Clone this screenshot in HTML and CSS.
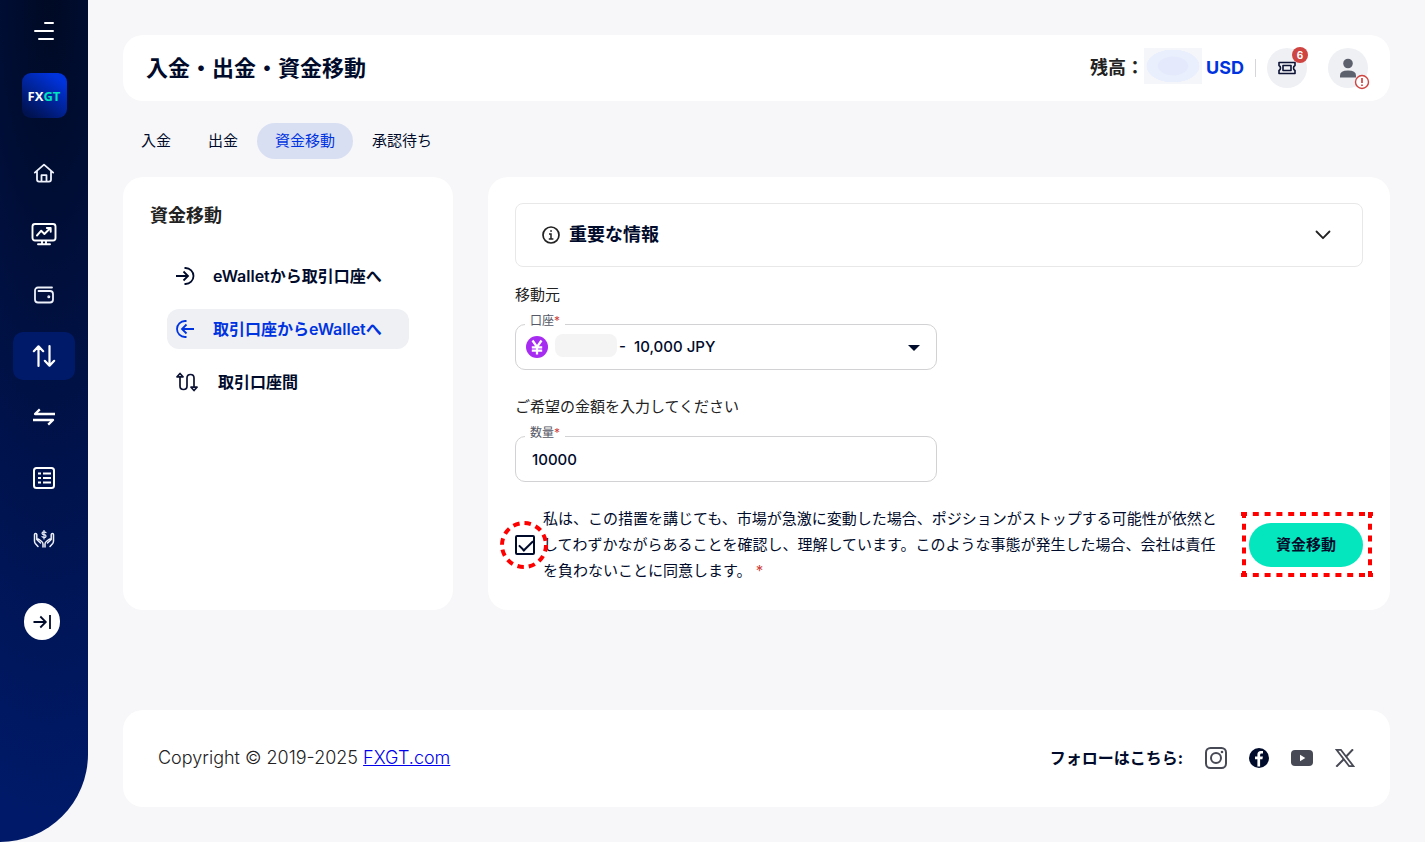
FILE: index.html
```html
<!DOCTYPE html>
<html lang="ja">
<head>
<meta charset="utf-8">
<meta name="viewport" content="width=device-width, initial-scale=1">
<title>入金・出金・資金移動</title>
<link rel="stylesheet" href="styles.css">
</head>
<body>
<aside class="sidebar">
  <button class="menu-toggle" type="button" aria-label="メニュー">
    <svg width="20" height="20" viewBox="0 0 20 20" fill="none" stroke="#fff" stroke-width="2" stroke-linecap="round"><path d="M11 2h8M1 10h18M5 18h14"/></svg>
  </button>
  <a class="logo" href="#"><span class="logo-fx">FX</span><span class="logo-gt">GT</span></a>
  <nav class="side-nav">
    <a class="side-link" href="#" aria-label="ホーム">
      <svg width="22" height="20" viewBox="0 0 22 20" fill="none" stroke="#eef1fa" stroke-width="1.8" stroke-linecap="round" stroke-linejoin="round"><path d="M1.8 9.6 11 1.6l9.2 8M4 8v8.600a2 2 0 0 0 2 2h10a2 2 0 0 0 2-2V8M8.500 18.400v-6.200h5v6.200"/></svg>
    </a>
    <a class="side-link" href="#" aria-label="取引">
      <svg width="26" height="24" viewBox="0 0 26 24" fill="none" stroke="#fff" stroke-width="1.900" stroke-linecap="round" stroke-linejoin="round"><rect x="1.500" y="2" width="23" height="16.500" rx="2.500"/><path d="M6 13.500l4.200-4.800 3.200 3.300 6-6M15.800 6h3.900v3.800M11 19v3M15 19v3M7 22.300h12"/></svg>
    </a>
    <a class="side-link" href="#" aria-label="ウォレット">
      <svg width="20" height="18" viewBox="0 0 20 18" fill="none" stroke="#eef1fa" stroke-width="1.800" stroke-linecap="round" stroke-linejoin="round"><path d="M18 1.500H4A3 3 0 0 0 1 4.500V13.500a3 3 0 0 0 3 3h12a3 3 0 0 0 3-3V8a3 3 0 0 0-3-3H4.500"/><circle cx="14.800" cy="10.800" r=".6" fill="#eef1fa"/></svg>
    </a>
    <a class="side-link is-active" href="#" aria-label="入金・出金・資金移動">
      <svg width="24" height="24" viewBox="0 0 24 24" fill="none" stroke="#fff" stroke-width="2.200" stroke-linecap="round" stroke-linejoin="round"><path d="M6.500 22V2.500M1.800 7.200l4.700-4.900 4.700 4.900M17.500 2v19.500M12.800 16.800l4.700 4.900 4.700-4.900"/></svg>
    </a>
    <a class="side-link" href="#" aria-label="両替">
      <svg width="24" height="18" viewBox="0 0 24 18" fill="none" stroke="#fff" stroke-width="2.300" stroke-linejoin="round"><path d="M23 6H3L7.800 1.400M1 12h20l-4.800 4.600"/></svg>
    </a>
    <a class="side-link" href="#" aria-label="履歴">
      <svg width="22" height="22" viewBox="0 0 22 22" fill="none" stroke="#fff" stroke-width="2"><rect x="1" y="1" width="20" height="20" rx="2.500"/><path d="M5 6.500h3M5 11h3M5 15.500h3M10 6.500h8M10 11h8M10 15.500h8"/></svg>
    </a>
    <a class="side-link" href="#" aria-label="パートナー">
      <svg width="22" height="18" viewBox="0 0 22 18" fill="none" stroke="#eef1fa" stroke-width="1.500" stroke-linecap="round" stroke-linejoin="round"><path d="M5 16.500 2.300 13.500Q1.500 12.500 1.500 11V4.500q0-1 1.100-1T3.800 4.500V9.500L7.500 13M4 9.500q1-1 2.200 0l2.500 2q1.300 1 1.300 2.500V17M17 16.500l2.700-3q.8-1 .8-2.500V4.500q0-1-1.100-1t-1.200 1V9.500L14.500 13M18 9.500q-1-1-2.200 0l-2.500 2q-1.300 1-1.300 2.500V17"/><path d="M13 2.600q-.8-.8-2-.8-2 0-2 1.400T11 4.600t2 1.500-2 1.400q-1.200 0-2-.8M11 .5V9" stroke-width="1.200"/></svg>
    </a>
  </nav>
  <button class="expand" type="button" aria-label="サイドバーを開く">
    <svg width="20" height="18" viewBox="0 0 20 18" fill="none" stroke="#000b2b" stroke-width="1.800"><path d="M1.500 9h12M8.300 3.500 13.800 9l-5.500 5.500M18 2v14"/></svg>
  </button>
</aside>

<main class="page">
  <header class="topbar">
    <h1 class="page-title">入金・出金・資金移動</h1>
    <div class="account">
      <span class="balance-label">残高：</span>
      <span class="balance-mask"></span>
      <span class="currency">USD</span>
      <span class="divider"></span>
      <button class="round-btn ticket" type="button" aria-label="クーポン">
        <svg width="20" height="14" viewBox="0 0 20 14" fill="none" stroke="#0b1233" stroke-width="1.600" stroke-linejoin="round"><path d="M2 1.500h16v3q-1.500.8-1.500 2.500t1.500 2.500v3H2v-3q1.500-.8 1.500-2.500T2 4.500z"/><rect x="6" y="4.500" width="8" height="5"/></svg>
        <span class="badge">6</span>
      </button>
      <button class="round-btn" type="button" aria-label="プロフィール">
        <svg width="18" height="20" viewBox="0 0 18 20" fill="#5d606d"><circle cx="9" cy="5.500" r="4.800"/><path d="M1 19.500V17.500Q1 12.500 9 12.500t8 5v2z"/></svg>
        <svg class="alert" width="16" height="16" viewBox="0 0 16 16" fill="#fff" stroke="#cf4340" stroke-width="1.400"><circle cx="8" cy="8" r="6.500"/><path d="M8 4v5M8 10.500V12" stroke-width="1.700"/></svg>
      </button>
    </div>
  </header>

  <nav class="tabs">
    <a class="tab" href="#">入金</a>
    <a class="tab" href="#">出金</a>
    <a class="tab is-active" href="#">資金移動</a>
    <a class="tab" href="#">承認待ち</a>
  </nav>

  <div class="columns">
    <section class="card side-card">
      <h2 class="card-title">資金移動</h2>
      <nav class="options">
        <a class="option" href="#">
          <svg width="20" height="18" viewBox="0 0 20 18" fill="none" stroke="#000b2b" stroke-width="1.800"><path d="M0 9h12.500M7.500 4.500 12 9l-4.500 4.500M8.500 1h1a8 8 0 0 1 0 16h-1"/></svg>
          <span>eWalletから取引口座へ</span>
        </a>
        <a class="option is-active" href="#">
          <svg width="20" height="18" viewBox="0 0 20 18" fill="none" stroke="#0033e0" stroke-width="1.800"><path d="M18 9H6M10.500 4.500 6 9l4.500 4.500M10.500 1h-1.500a8 8 0 0 0 0 16h1.500"/></svg>
          <span>取引口座からeWalletへ</span>
        </a>
        <a class="option option-wide" href="#">
          <svg width="22" height="20" viewBox="0 0 22 20" fill="none" stroke="#0b1233" stroke-width="1.700" stroke-linejoin="round"><path d="M4 5v9q0 3.500 3.500 3.500T11 14V6q0-3.500 3.500-3.500T18 6v9M1 4.800 4 1.500l3 3.300zM15 15.200l3 3.300 3-3.300z"/></svg>
          <span>取引口座間</span>
        </a>
      </nav>
    </section>

    <section class="card">
      <button class="accordion" type="button" aria-expanded="false">
        <svg width="18" height="18" viewBox="0 0 18 18" fill="none" stroke="#222"><circle cx="9" cy="9" r="8" stroke-width="1.700"/><path d="M7 8h2v5M6.800 13h4.600M8.200 5h1.700" stroke-width="1.500"/></svg>
        <span class="accordion-title">重要な情報</span>
        <svg width="16" height="10" viewBox="0 0 16 10" fill="none" stroke="#222" stroke-width="1.800" stroke-linecap="round" stroke-linejoin="round"><path d="M1.500 1.500 8 8.200l6.500-6.700"/></svg>
      </button>

      <form class="form">
        <p class="form-label">移動元</p>
        <div class="field">
          <label class="float-label" for="account">口座<span class="required">*</span></label>
          <svg class="yen" width="22" height="22" viewBox="0 0 22 22"><circle cx="11" cy="11" r="11" fill="#a62cf2"/><path d="M6.500 4.500 11 11l4.500-6.500M11 11v7.500M5.800 11.300h10.400M5.800 14.600h10.400" fill="none" stroke="#fff" stroke-width="2.300"/></svg>
          <span class="account-mask"></span>
          <select class="control select" id="account"><option>-&nbsp; 10,000 JPY</option></select>
          <svg class="caret" width="12" height="6" viewBox="0 0 12 6"><path d="M0 0h12L6 6z" fill="#000b2b"/></svg>
        </div>

        <p class="form-label amount-label">ご希望の金額を入力してください</p>
        <div class="field">
          <label class="float-label" for="amount">数量<span class="required">*</span></label>
          <input class="control" id="amount" type="text" value="10000">
        </div>

        <div class="consent">
          <span class="check-wrap">
            <input class="check" id="agree" type="checkbox" checked>
            <svg class="check-ring" width="48" height="48" viewBox="0 0 48 48" fill="none" stroke="#f00" stroke-width="4" stroke-dasharray="6.500 5"><circle cx="24" cy="24" r="22"/></svg>
          </span>
          <label class="consent-text" for="agree">私は、この措置を講じても、市場が急激に変動した場合、ポジションがストップする可能性が依然と<br>してわずかながらあることを確認し、理解しています。このような事態が発生した場合、会社は責任<br>を負わないことに同意します。 <span class="required">*</span></label>
          <span class="submit-wrap">
            <button class="submit" type="button">資金移動</button>
            <svg class="submit-ring" width="132" height="68" viewBox="0 0 132 68" fill="none" stroke="#f00" stroke-width="4" stroke-dasharray="6 5.800"><path d="M0 3h132M0 64h132M3 1v66M129 1v66"/></svg>
          </span>
        </div>
      </form>
    </section>
  </div>

  <footer class="footer">
    <p class="copyright">Copyright © 2019-2025 <a href="#">FXGT.com</a></p>
    <div class="follow">
      <span class="follow-label">フォローはこちら:</span>
      <a class="social" href="#" aria-label="Instagram"><svg width="22" height="22" viewBox="0 0 22 22" fill="none" stroke="#474955" stroke-width="2"><rect x="1" y="1" width="20" height="20" rx="4.500"/><circle cx="11" cy="11" r="5"/><circle cx="17" cy="5" r="1.300" fill="#474955" stroke="none"/></svg></a>
      <a class="social" href="#" aria-label="Facebook"><svg width="20" height="20" viewBox="0 0 20 20"><circle cx="10" cy="10" r="10" fill="#000b2b"/><path d="M8.400 18.500V11.300H6V8.500h2.400V6.600q0-3.600 3.500-3.600h2.100v2.600h-1.500q-1.400 0-1.400 1.400v1.500h2.800l-.5 2.800h-2.300v7.200z" fill="#fff"/></svg></a>
      <a class="social" href="#" aria-label="YouTube"><svg width="22" height="16" viewBox="0 0 22 16"><rect width="22" height="16" rx="4" fill="#474955"/><path d="M9 4.800v6.400l5.300-3.200z" fill="#fff"/></svg></a>
      <a class="social" href="#" aria-label="X"><svg width="20" height="18" viewBox="0 0 20 18" fill="none" stroke="#474955"><path d="M1.500.8h4.300l12.700 16.400h-4.300z" stroke-width="1.800"/><path d="M18 .3l-7.300 7.700M8.800 10.200 1.300 17.700" stroke-width="2"/></svg></a>
    </div>
  </footer>
</main>
</body>
</html>
```
FILE: styles.css
```css
* { box-sizing: border-box; }

body {
  margin: 0;
  display: flex;
  min-height: 100vh;
  background: #f7f7f9;
  color: #222;
  font-family: Inter, "Noto Sans CJK JP", sans-serif;
  font-size: 15px;
}

h1, h2, p { margin: 0; }
a { text-decoration: none; color: inherit; }
button, input, select { font: inherit; color: inherit; }
button { border: 0; padding: 0; cursor: pointer; }
svg { display: block; flex: none; }

.sidebar {
  flex: 0 0 88px;
  display: flex;
  flex-direction: column;
  align-items: center;
  padding-top: 21px;
  border-bottom-right-radius: 88px;
  background: radial-gradient(ellipse 220px 820px at 50px 0, #000a24, #00124a 55%, #001a69);
}
.menu-toggle { background: none; }
.logo {
  display: flex;
  align-items: center;
  justify-content: center;
  width: 45px;
  height: 45px;
  margin-top: 32px;
  border-radius: 9px;
  background: linear-gradient(215deg, #0033dc 15%, #001250 90%);
  font-family: "Open Sans", sans-serif;
  font-size: 13px;
  font-weight: 700;
}
.logo-fx { color: #fff; }
.logo-gt { color: #00e6be; }
.side-nav {
  display: flex;
  flex-direction: column;
  gap: 13px;
  margin-top: 31px;
}
.side-link {
  display: flex;
  align-items: center;
  justify-content: center;
  width: 62px;
  height: 48px;
  border-radius: 10px;
}
.side-link.is-active { background: #001a6a; }
.expand {
  display: flex;
  align-items: center;
  justify-content: center;
  width: 36px;
  height: 37px;
  margin: 40px 5px 0 0;
  border-radius: 18px;
  background: #fff;
}

.page {
  flex: 1;
  min-width: 0;
  display: flex;
  flex-direction: column;
  padding: 35px;
}
.topbar, .card, .footer {
  background: #fff;
  border-radius: 20px;
}
.topbar {
  display: flex;
  align-items: center;
  justify-content: space-between;
  padding: 13px 22px 13px 23px;
}
.page-title {
  color: #000b2b;
  font-size: 22px;
  line-height: 32px;
}
.account { display: flex; align-items: center; }
.balance-label { font-size: 18px; font-weight: 700; line-height: 24px; }
.balance-mask {
  align-self: flex-start;
  width: 58px;
  height: 36px;
  margin-right: 4px;
  background: radial-gradient(ellipse closest-side, #e4eafb 50%, #e9effc 55%, #e9effc 90%, #f5f6fa 92%);
}
.currency { color: #0033e0; font-size: 18px; font-weight: 700; line-height: 24px; }
.divider { width: 1px; height: 18px; margin: 0 11px; background: #d5d6da; }
.round-btn {
  position: relative;
  display: flex;
  align-items: center;
  justify-content: center;
  width: 40px;
  height: 40px;
  border-radius: 50%;
  background: #eff0f4;
}
.ticket { margin-right: 21px; }
.badge {
  position: absolute;
  top: -1px;
  right: -1px;
  width: 16px;
  height: 16px;
  border-radius: 50%;
  background: #cf4340;
  color: #fff;
  font-size: 10px;
  font-weight: 700;
  line-height: 16px;
}
.alert { position: absolute; right: -2px; bottom: -2px; }

.tabs { display: flex; gap: 1px; margin-top: 22px; color: #000b2b; }
.tab { padding: 0 18px; border-radius: 18px; line-height: 36px; }
.tab.is-active { background: #d8dff2; color: #0033e0; }

.columns {
  display: grid;
  grid-template-columns: 330px minmax(0, 1fr);
  gap: 35px;
  margin-top: 18px;
}
.card { padding: 26px 27px; }
.card-title { font-size: 18px; line-height: 26px; }
.options {
  display: flex;
  flex-direction: column;
  gap: 13px;
  margin: 27px 17px 0;
}
.option {
  display: flex;
  align-items: center;
  gap: 17px;
  height: 40px;
  padding: 0 9px;
  border-radius: 12px;
  color: #000b2b;
  font-size: 16px;
  font-weight: 600;
  line-height: 20px;
  white-space: nowrap;
}
.option-wide { gap: 20px; }
.option.is-active { background: #eff0f4; color: #0033e0; }

.accordion {
  display: flex;
  align-items: center;
  gap: 9px;
  width: 100%;
  height: 64px;
  padding: 0 31px 0 26px;
  border: 1px solid #e8e8e8;
  border-radius: 8px;
  background: #fff;
  text-align: left;
}
.accordion-title { flex: 1; color: #000b2b; font-size: 18px; font-weight: 700; line-height: 24px; }

.form-label { margin: 16px 0 17px; line-height: 24px; }
.amount-label { margin-top: 25px; }
.field { position: relative; max-width: 422px; }
.float-label {
  position: absolute;
  top: -12px;
  left: 10px;
  padding: 0 5px;
  background: #fff;
  color: #555866;
  font-size: 12px;
  line-height: 18px;
}
.required { color: #cf4340; }
.control {
  display: block;
  width: 100%;
  height: 46px;
  padding: 0 16px;
  border: 1px solid #d2d2d4;
  border-radius: 10px;
  background: transparent;
  color: #000b2b;
  font-size: 15px;
  font-weight: 500;
  outline: 0;
}
.select { appearance: none; padding-left: 103px; padding-bottom: 2px; }
.yen { position: absolute; top: 12px; left: 11px; }
.account-mask {
  position: absolute;
  top: 10px;
  left: 40px;
  width: 62px;
  height: 23px;
  border-radius: 8px;
  background: #f4f4f5;
}
.caret { position: absolute; top: 21px; right: 17px; pointer-events: none; }

.consent {
  display: flex;
  align-items: center;
  margin-top: 24px;
  color: #000b2b;
}
.check-wrap, .submit-wrap { position: relative; flex: none; }
.check-wrap { width: 20px; height: 20px; margin-right: 8px; }
.check {
  appearance: none;
  display: block;
  width: 20px;
  height: 20px;
  margin: 0;
  border: 2px solid #000b2b;
  border-radius: 2px;
}
.check:checked::before {
  content: "";
  display: block;
  width: 12px;
  height: 6px;
  margin: 3px 2px;
  border: solid #000b2b;
  border-width: 0 0 2px 2px;
  transform: rotate(-45deg);
}
.check-ring { position: absolute; top: -14px; left: -15px; pointer-events: none; }
.consent-text { flex: 1; line-height: 26px; }
.submit {
  display: block;
  height: 44px;
  padding: 0 27px 4px;
  border-radius: 22px;
  background: #04e6be;
  color: #000b2b;
  font-weight: 700;
}
.submit-ring { position: absolute; top: -12px; right: -10px; pointer-events: none; }

.footer {
  display: flex;
  align-items: center;
  justify-content: space-between;
  margin-top: auto;
  padding: 33px 35px 35px;
}
.copyright { font-size: 18px; font-weight: 300; line-height: 29px; }
.copyright a { color: #00e; text-decoration: underline; }
.follow { display: flex; align-items: center; }
.follow-label { color: #000b2b; font-size: 16px; font-weight: 700; line-height: 24px; }
.social { margin-left: 22px; }
```
